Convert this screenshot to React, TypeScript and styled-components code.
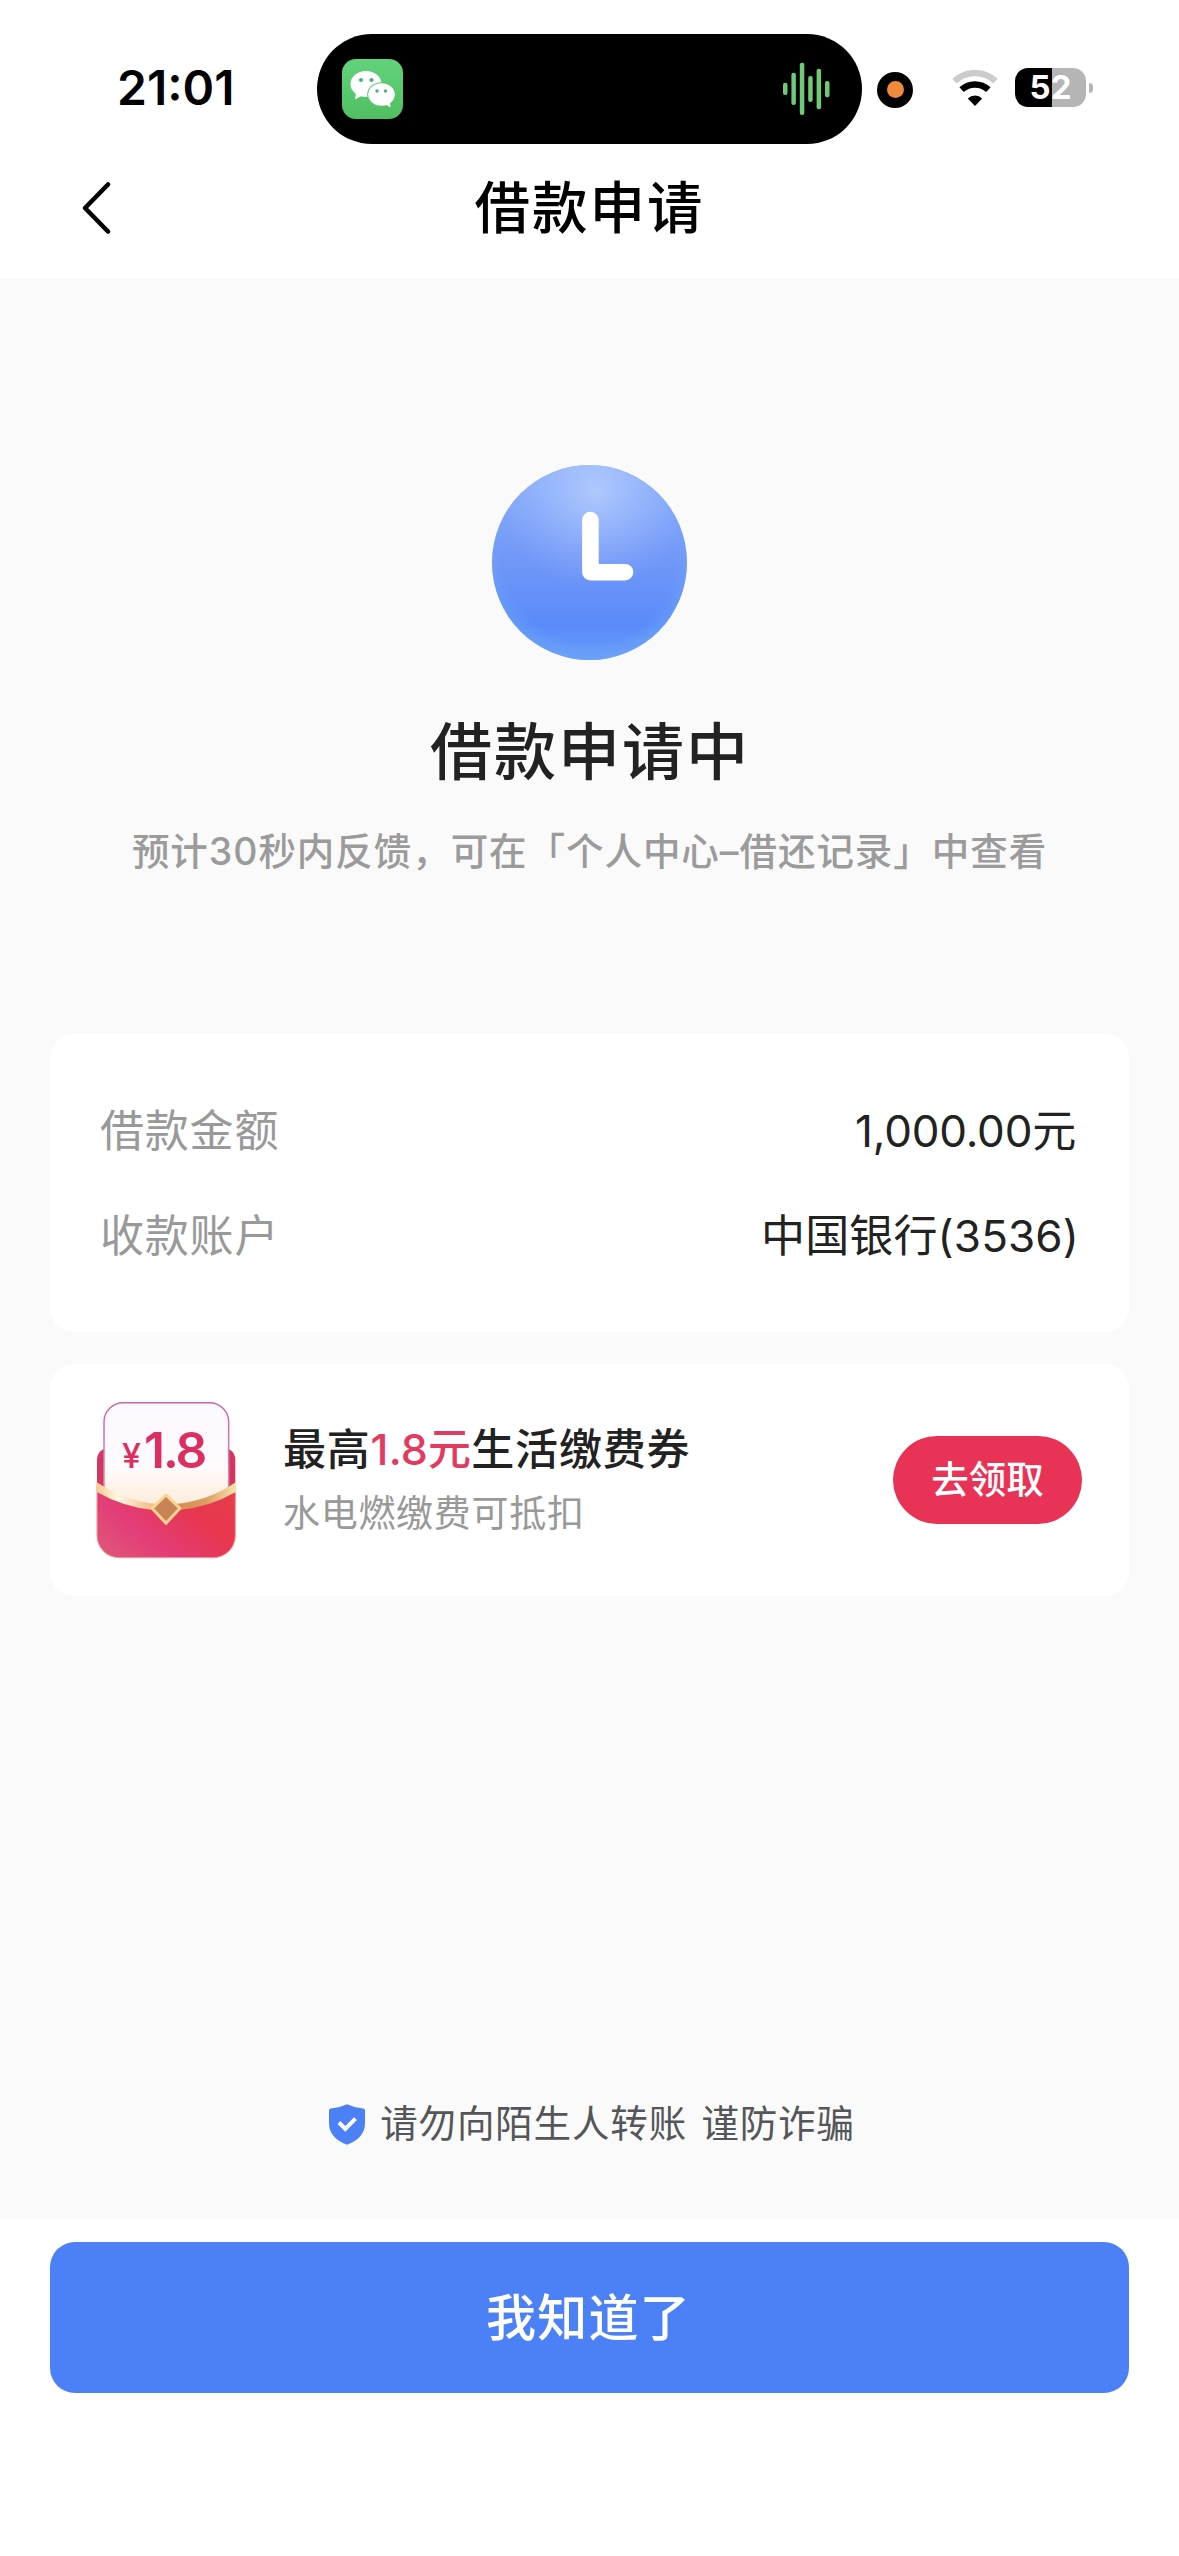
import React from 'react';
import styled, { createGlobalStyle } from 'styled-components';

const GlobalStyle = createGlobalStyle`
  * { box-sizing: border-box; }
  body {
    margin: 0;
    background: #ffffff;
    font-family: Inter, "Noto Sans CJK SC", sans-serif;
    color: #222222;
  }
  button { font-family: inherit; border: 0; padding: 0; }
`;

const Screen = styled.div`
  width: 1179px;
  height: 2556px;
  display: flex;
  flex-direction: column;
  background: #ffffff;
  overflow: hidden;
`;

const StatusBar = styled.header`
  height: 178px;
  flex: none;
  display: flex;
  align-items: center;
  padding-left: 117px;
`;

const Time = styled.span`
  width: 200px;
  font-size: 48px;
  line-height: 56px;
  font-weight: 600;
  letter-spacing: 0px;
  color: #000000;
  margin-top: -3px;
`;

const Island = styled.div`
  width: 545px;
  height: 110px;
  border-radius: 55px;
  background: #000000;
  display: flex;
  align-items: center;
  justify-content: space-between;
  padding: 0 31px 0 25px;
`;

const RecordingDot = styled.span`
  width: 36px;
  height: 36px;
  margin: 1px 39px 0 15px;
  border-radius: 50%;
  background: #000000;
  display: grid;
  place-items: center;

  &::after {
    content: '';
    width: 17px;
    height: 17px;
    border-radius: 50%;
    background: #f08a3c;
  }
`;

const Battery = styled.div`
  display: flex;
  align-items: center;
  gap: 3px;
  margin: -3px 0 0 17px;
`;

const BatteryBody = styled.span<{ $level: number }>`
  width: 71px;
  height: 39px;
  border-radius: 13px;
  background: linear-gradient(90deg, #000000 ${(p) => p.$level}%, #b5b5b5 ${(p) => p.$level}%);
  color: #ffffff;
  font-size: 33px;
  line-height: 39px;
  font-weight: 700;
  text-align: center;
`;

const BatteryTip = styled.span`
  width: 4px;
  height: 10px;
  border-radius: 0 5px 5px 0;
  background: #b5b5b5;
`;

const NavBar = styled.nav`
  height: 100px;
  flex: none;
  display: grid;
  grid-template-columns: 80px 1fr 80px;
  align-items: start;
  padding: 0 60px;
`;

const BackButton = styled.button`
  width: 80px;
  height: 60px;
  background: none;
  display: flex;
  align-items: center;
  padding-left: 20px;
`;

const NavTitle = styled.h1`
  margin: 0;
  text-align: center;
  font-size: 55.5px;
  line-height: 60px;
  font-weight: 500;
  letter-spacing: 2px;
  color: #000000;
`;

const Content = styled.main`
  height: 1941px;
  flex: none;
  background: #fafafa;
  display: flex;
  flex-direction: column;
  padding: 187px 50px 0;
`;

const Result = styled.section`
  display: flex;
  flex-direction: column;
  align-items: center;
  height: 569px;
`;

const ResultTitle = styled.h2`
  margin: 53px 0 0;
  font-size: 62px;
  line-height: 80px;
  font-weight: 500;
  letter-spacing: 2px;
  padding-left: 1px;
`;

const ResultNote = styled.p`
  margin: 34px 0 0;
  font-size: 37.5px;
  line-height: 50px;
  font-weight: 500;
  letter-spacing: 0.95px;
  white-space: nowrap;
  color: #9b9b9b;
`;

const Card = styled.section`
  background: #ffffff;
  border-radius: 24px;
`;

const LoanCard = styled(Card)`
  height: 298px;
  padding: 67px 50px 0;
  display: flex;
  flex-direction: column;
  gap: 45px;
`;

const LoanRow = styled.div`
  display: flex;
  justify-content: space-between;
  font-size: 44px;
  line-height: 60px;
`;

const LoanLabel = styled.span`
  color: #999999;
  letter-spacing: 0.8px;
`;

const LoanValue = styled.span<{ $spacing: number; $inset: number }>`
  letter-spacing: ${(p) => p.$spacing}px;
  padding-right: ${(p) => p.$inset}px;
`;

const CouponCard = styled(Card)`
  height: 232px;
  margin-top: 32px;
  padding: 0 47px 0 46px;
  display: flex;
  align-items: center;
`;

const CouponText = styled.div`
  flex: 1;
  margin: 4px 0 0 46px;
`;

const CouponTitle = styled.div`
  font-size: 43px;
  line-height: 64px;
  font-weight: 500;
  letter-spacing: 0.8px;
`;

const Highlight = styled.span`
  color: #e23a60;
  letter-spacing: 0.2px;
`;

const CouponNote = styled.div`
  font-size: 37px;
  line-height: 66px;
  letter-spacing: 0.7px;
  color: #999999;
`;

const ClaimButton = styled.button`
  width: 189px;
  height: 88px;
  border-radius: 44px;
  background: #e83357;
  color: #ffffff;
  font-size: 37.5px;
  line-height: 88px;
  font-weight: 500;
`;

const SafetyTip = styled.div`
  margin-top: 503px;
  padding-left: 5px;
  display: flex;
  justify-content: center;
  align-items: center;
  gap: 15px;
  height: 50px;
  font-size: 37.5px;
  line-height: 50px;
  letter-spacing: 0.85px;
  word-spacing: 3px;
  color: #55565a;
`;

const Footer = styled.footer`
  flex: 1;
  padding: 23px 50px 0;
`;

const PrimaryButton = styled.button`
  display: block;
  width: 100%;
  height: 151px;
  border-radius: 25px;
  background: #4c80f6;
  color: #ffffff;
  font-size: 50px;
  line-height: 152px;
  font-weight: 500;
  letter-spacing: 1.2px;
  padding-right: 2px;
`;

const WeChatIcon = () => (
  <svg width="61" height="60" viewBox="0 0 61 60">
    <defs>
      <linearGradient id="wechat" x1="0" y1="0" x2="0" y2="1">
        <stop offset="0" stopColor="#62d37c" />
        <stop offset="1" stopColor="#50bf61" />
      </linearGradient>
    </defs>
    <rect width="61" height="60" rx="14" fill="url(#wechat)" />
    <path d="M14 34 L13 40.5 L21 36 Z" fill="#fff" />
    <ellipse cx="24" cy="25" rx="15.5" ry="13" fill="#fff" />
    <ellipse cx="39.5" cy="35.5" rx="14.3" ry="12.2" fill="#57c66b" />
    <path d="M43 45 L48.5 48.5 L48 42 Z" fill="#fff" />
    <ellipse cx="39.5" cy="35.5" rx="13.3" ry="11.2" fill="#fff" />
    <g fill="#4fae78">
      <circle cx="19" cy="21" r="2.1" />
      <circle cx="29.5" cy="21" r="2.1" />
      <circle cx="35" cy="32" r="1.7" />
      <circle cx="43.5" cy="32" r="1.7" />
    </g>
  </svg>
);

const waveBars: Array<[number, number]> = [
  [82.7, 95],
  [72.7, 105],
  [62.7, 115],
  [76, 102],
  [68.7, 109.3],
  [81, 97.3],
];

const WaveIcon = () => (
  <svg width="48" height="54" viewBox="0 62 48 54">
    {waveBars.map(([top, bottom], i) => (
      <rect key={i} x={i * 8.4} y={top} width="4.5" height={bottom - top} rx="2" fill="#6fc976" />
    ))}
  </svg>
);

const WifiGlyph = styled.svg`
  width: 46px;
  height: 36px;
  margin-top: -3px;
`;

const WifiIcon = () => (
  <WifiGlyph viewBox="0 0 46 36">
    <path d="M2.5 11.2 A30 30 0 0 1 43.5 11.2" fill="none" stroke="#cccccc" strokeWidth="6.4" />
    <path d="M9.6 19.6 A20 20 0 0 1 36.4 19.6" fill="none" stroke="#000" strokeWidth="6.6" />
    <path d="M23 36 L15.8 28.4 A10.6 10.6 0 0 1 30.2 28.4 Z" fill="#000" />
  </WifiGlyph>
);

const BackIcon = () => (
  <svg width="32" height="56" viewBox="0 0 32 56">
    <path
      d="M28 4.5 L5 28 L28 51.5"
      fill="none"
      stroke="#000"
      strokeWidth="4.6"
      strokeLinecap="round"
      strokeLinejoin="round"
    />
  </svg>
);

const ClockIcon = () => (
  <svg width="195" height="195" viewBox="0 0 195 195">
    <defs>
      <linearGradient id="clockBase" x1="0" y1="0" x2="0" y2="1">
        <stop offset="0" stopColor="#8fb2fb" />
        <stop offset="0.45" stopColor="#7399f8" />
        <stop offset="0.82" stopColor="#5a8bfa" />
        <stop offset="1" stopColor="#659cf8" />
      </linearGradient>
      <radialGradient id="clockGlow" cx="0.53" cy="0.13" r="0.5">
        <stop offset="0" stopColor="#b4ccfe" stopOpacity="0.9" />
        <stop offset="1" stopColor="#9ab8fc" stopOpacity="0" />
      </radialGradient>
      <radialGradient id="clockRim" cx="0.5" cy="0.46" r="0.56">
        <stop offset="0.8" stopColor="#6ea6f8" stopOpacity="0" />
        <stop offset="1" stopColor="#6ea6f8" stopOpacity="0.7" />
      </radialGradient>
    </defs>
    <circle cx="97.5" cy="97.5" r="97.5" fill="url(#clockBase)" />
    <circle cx="97.5" cy="97.5" r="97.5" fill="url(#clockGlow)" />
    <circle cx="97.5" cy="97.5" r="97.5" fill="url(#clockRim)" />
    <path
      d="M98.4 55 V107.2 H133"
      fill="none"
      stroke="#fff"
      strokeWidth="16.6"
      strokeLinecap="round"
      strokeLinejoin="round"
    />
  </svg>
);

const EnvelopeIcon = () => (
  <svg width="141" height="158" viewBox="79 92 423 474">
    <defs>
      <linearGradient id="sheet" x1="0" y1="0" x2="0" y2="1">
        <stop offset="0" stopColor="#fbf8ff" />
        <stop offset="0.6" stopColor="#fffafc" />
        <stop offset="1" stopColor="#fdebd6" />
      </linearGradient>
      <linearGradient id="sheetLine" x1="0" y1="0" x2="0" y2="1">
        <stop offset="0" stopColor="#c568ae" />
        <stop offset="1" stopColor="#f08aa8" />
      </linearGradient>
      <linearGradient id="pocket" x1="0" y1="0.9" x2="1" y2="0.3">
        <stop offset="0" stopColor="#e0567a" />
        <stop offset="0.35" stopColor="#e33d78" />
        <stop offset="0.75" stopColor="#e8364f" />
        <stop offset="1" stopColor="#e63c4c" />
      </linearGradient>
      <linearGradient id="goldLeft" x1="0" y1="0" x2="1" y2="0">
        <stop offset="0" stopColor="#f6c98e" />
        <stop offset="0.35" stopColor="#fff6e2" />
        <stop offset="1" stopColor="#efb67a" />
      </linearGradient>
      <linearGradient id="goldRight" x1="0" y1="0" x2="1" y2="0">
        <stop offset="0" stopColor="#d68a50" />
        <stop offset="0.5" stopColor="#dd9c62" />
        <stop offset="1" stopColor="#fbe3b0" />
      </linearGradient>
    </defs>
    <rect x="82" y="232" width="415" height="200" rx="36" fill="#cf375f" />
    <path
      d="M103 420 V155 A58 58 0 0 1 161 97 H419 A58 58 0 0 1 477 155 V420 Z"
      fill="url(#sheet)"
      stroke="url(#sheetLine)"
      strokeWidth="4.5"
    />
    <path
      d="M82 350 Q180 412 290 418 Q400 412 497 350 V496 A66 66 0 0 1 431 562 H148 A66 66 0 0 1 82 496 Z"
      fill="url(#pocket)"
      stroke="#f29a9a"
      strokeWidth="3"
    />
    <path d="M80 334 Q160 390 262 401 L256 420 Q160 410 80 364 Z" fill="url(#goldLeft)" />
    <path d="M500 334 Q420 390 318 401 L324 420 Q420 410 500 364 Z" fill="url(#goldRight)" />
    <path d="M289 374 L331 414 L289 459 L247 414 Z" fill="#c98455" stroke="#fbd392" strokeWidth="9" strokeLinejoin="round" />
    <text x="157" y="292" fontSize="102" fontWeight="500" fill="#dc2f60">¥</text>
    <text x="223" y="292" fontSize="149" fontWeight="600" letterSpacing="-6" fill="#dc2f60">1.8</text>
  </svg>
);

const ShieldIcon = () => (
  <svg width="36" height="41" viewBox="0 0 36 41">
    <path
      d="M18 0.3 Q26 4.2 34 4.4 Q36 4.4 36 6.4 V19 Q36 34 18 40.7 Q0 34 0 19 V6.4 Q0 4.4 2 4.4 Q10 4.2 18 0.3 Z"
      fill="#4c80f6"
    />
    <path d="M10 18.5 L16.3 25 L26.5 14.6" fill="none" stroke="#fff" strokeWidth="4" />
  </svg>
);

export default function App() {
  return (
    <>
      <GlobalStyle />
      <Screen>
        <StatusBar>
          <Time>21:01</Time>
          <Island>
            <WeChatIcon />
            <WaveIcon />
          </Island>
          <RecordingDot />
          <WifiIcon />
          <Battery>
            <BatteryBody $level={52}>52</BatteryBody>
            <BatteryTip />
          </Battery>
        </StatusBar>
        <NavBar>
          <BackButton aria-label="返回">
            <BackIcon />
          </BackButton>
          <NavTitle>借款申请</NavTitle>
        </NavBar>
        <Content>
          <Result>
            <ClockIcon />
            <ResultTitle>借款申请中</ResultTitle>
            <ResultNote>预计30秒内反馈，可在「个人中心–借还记录」中查看</ResultNote>
          </Result>
          <LoanCard>
            <LoanRow>
              <LoanLabel>借款金额</LoanLabel>
              <LoanValue $spacing={-0.2} $inset={3}>1,000.00元</LoanValue>
            </LoanRow>
            <LoanRow>
              <LoanLabel>收款账户</LoanLabel>
              <LoanValue $spacing={0.15} $inset={0}>中国银行(3536)</LoanValue>
            </LoanRow>
          </LoanCard>
          <CouponCard>
            <EnvelopeIcon />
            <CouponText>
              <CouponTitle>
                最高<Highlight>1.8元</Highlight>生活缴费券
              </CouponTitle>
              <CouponNote>水电燃缴费可抵扣</CouponNote>
            </CouponText>
            <ClaimButton>去领取</ClaimButton>
          </CouponCard>
          <SafetyTip>
            <ShieldIcon />
            <span>请勿向陌生人转账 谨防诈骗</span>
          </SafetyTip>
        </Content>
        <Footer>
          <PrimaryButton>我知道了</PrimaryButton>
        </Footer>
      </Screen>
    </>
  );
}
